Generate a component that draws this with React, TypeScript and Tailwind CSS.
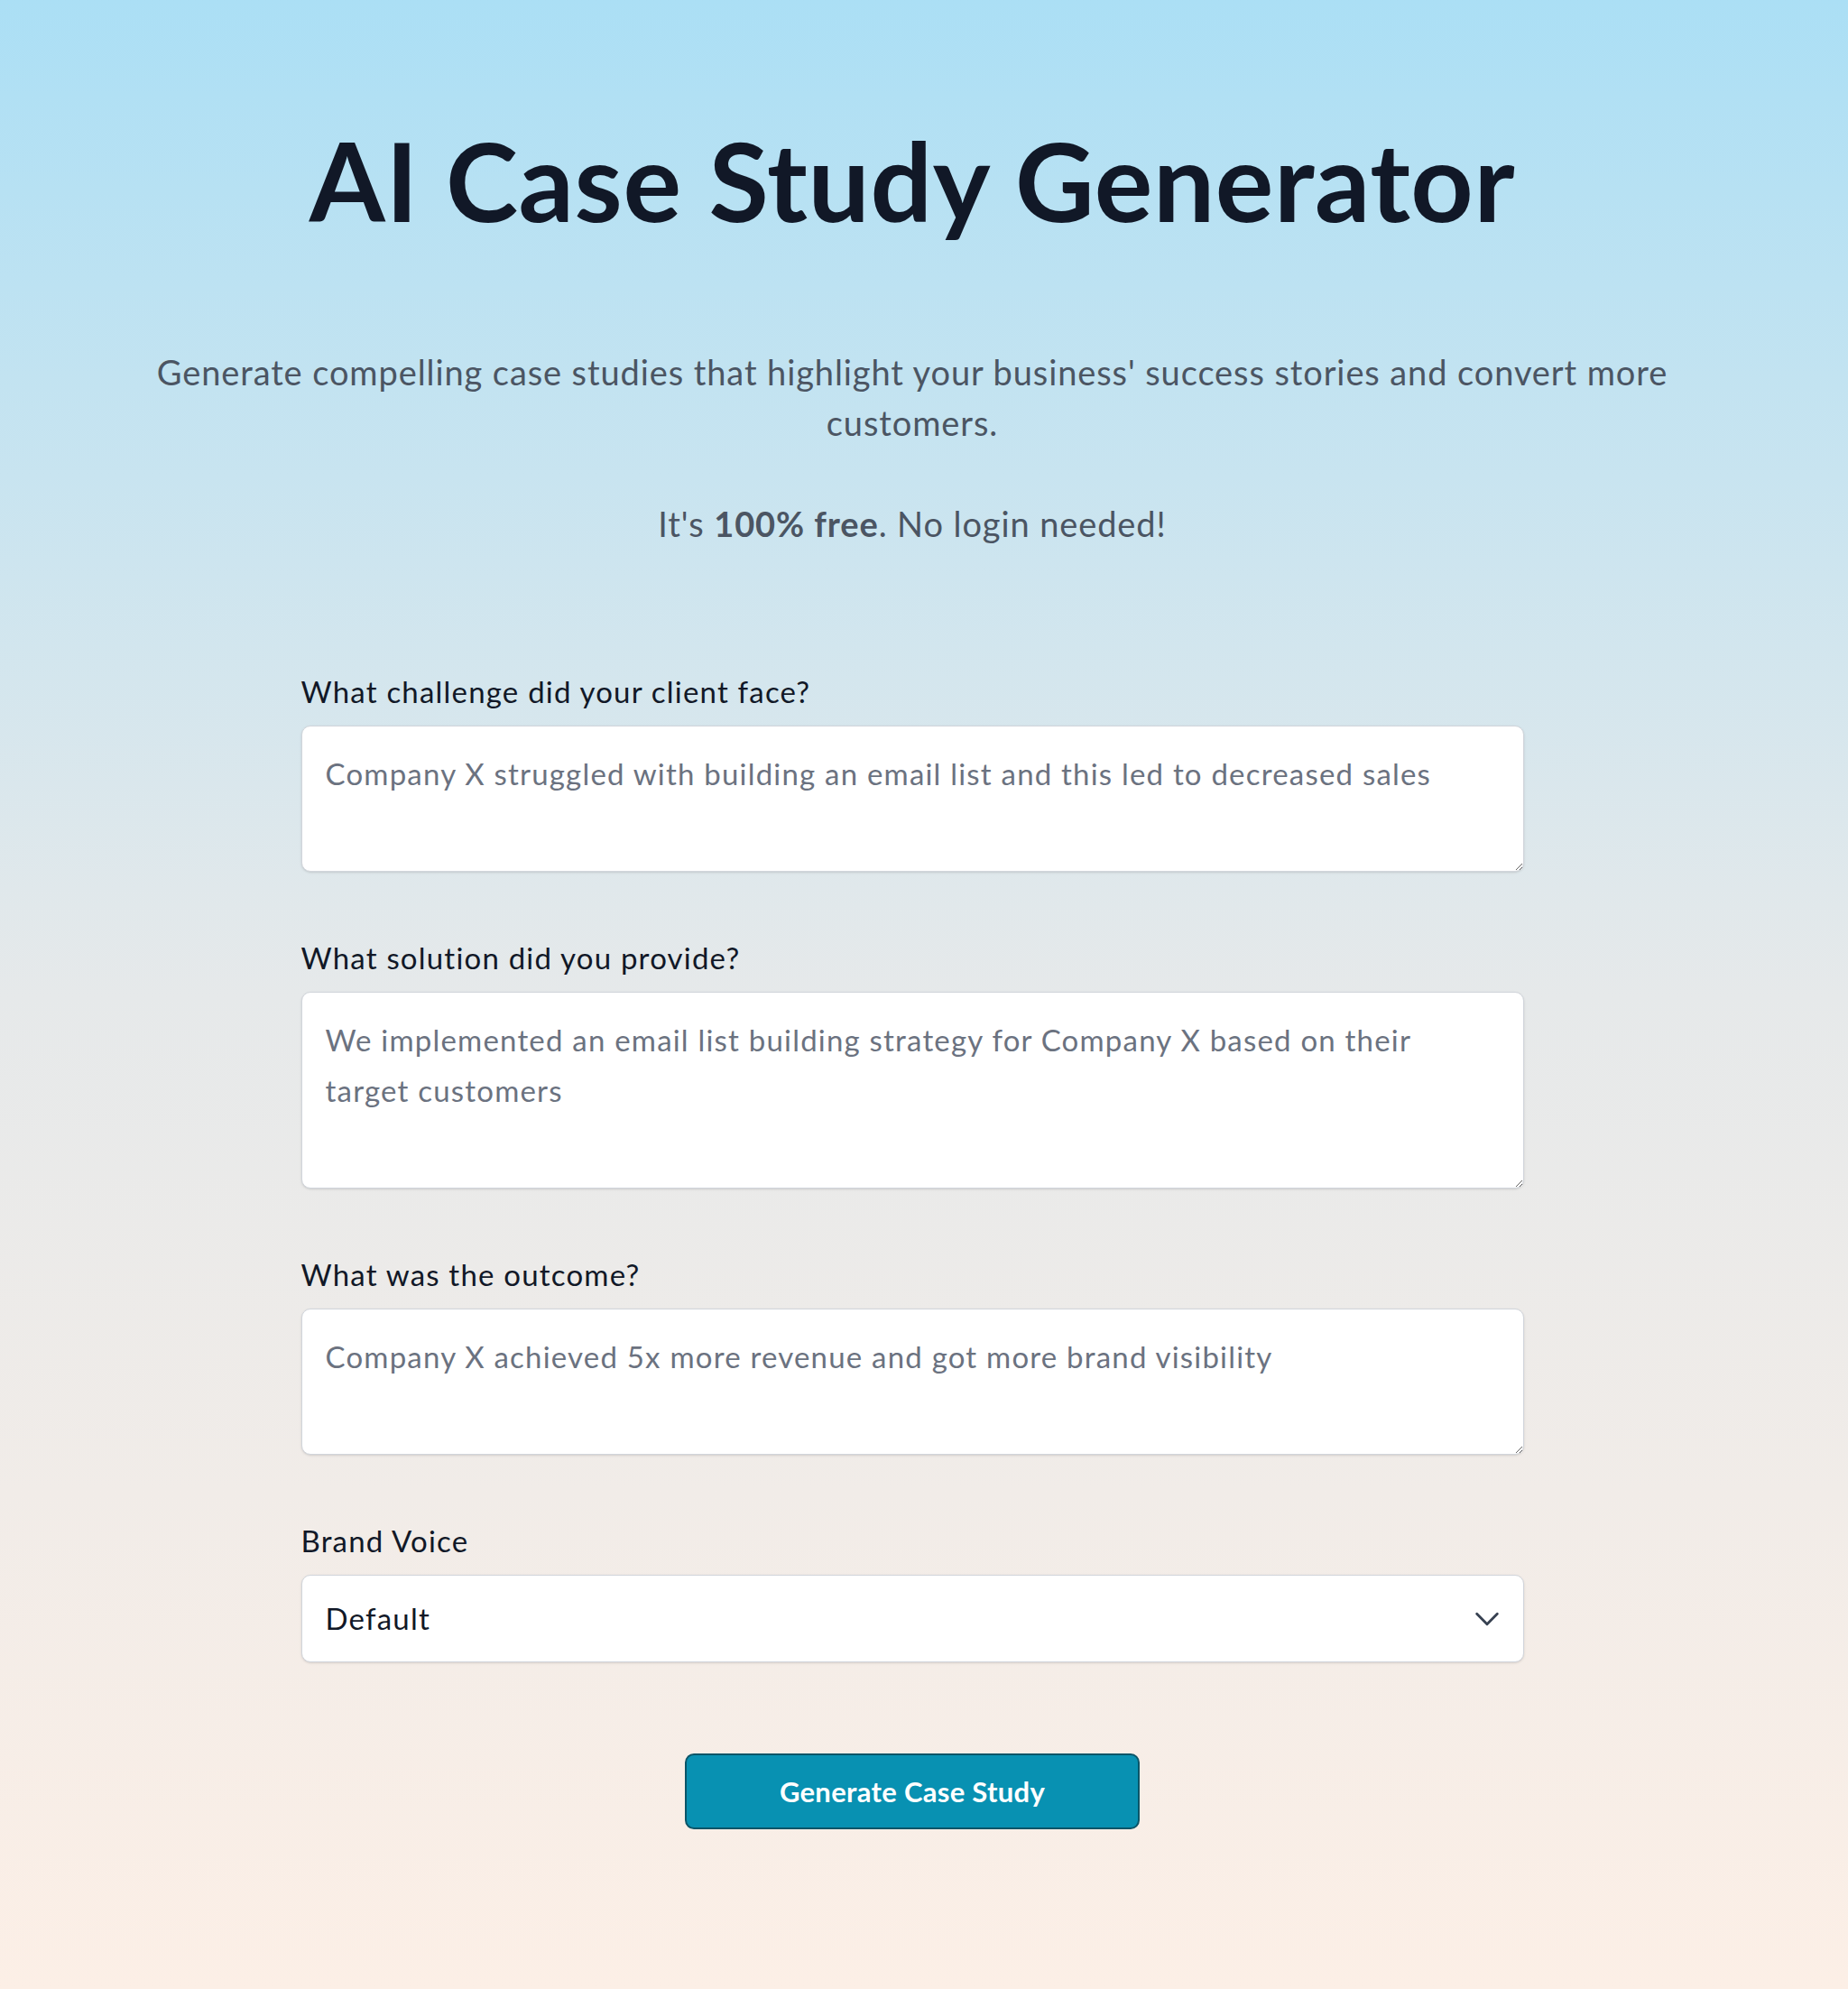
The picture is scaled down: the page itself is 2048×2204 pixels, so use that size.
import React, { useState } from 'react';

/* ── field definitions ── */
const fields = [
  {
    id: 'challenge',
    label: 'What challenge did your client face?',
    placeholder: 'Company X struggled with building an email list and this led to decreased sales',
    rows: 2,
  },
  {
    id: 'solution',
    label: 'What solution did you provide?',
    placeholder: 'We implemented an email list building strategy for Company X based on their target customers',
    rows: 3,
  },
  {
    id: 'outcome',
    label: 'What was the outcome?',
    placeholder: 'Company X achieved 5x more revenue and got more brand visibility',
    rows: 2,
  },
];

const voices = ['Default', 'Professional', 'Friendly', 'Witty', 'Persuasive'];

export default function App() {
  const [values, setValues] = useState<Record<string, string>>({});
  const [voice, setVoice] = useState('Default');

  return (
    <div
      className="min-h-[2204px] w-full bg-gradient-to-b from-[#abdff5] via-[#e6e9ea] to-[#fcefe6] text-[#111827]"
      style={{ fontFamily: 'Lato, "Open Sans", sans-serif' }}
    >
      <div className="mx-auto flex flex-col items-center pr-[26px] pt-[120px] pb-[176px]">
        {/* Heading */}
        <h1 className="text-center text-[121px] font-bold leading-[160px] tracking-[0.6px] text-[#111827]">
          AI Case Study Generator
        </h1>

        <p className="mt-[104px] max-w-[1700px] text-center text-[38px] leading-[56px] tracking-[0.9px] text-[#4b5563]">
          Generate compelling case studies that highlight your business' success stories and convert more customers.
        </p>

        <p className="mt-[56px] text-center text-[38px] leading-[56px] tracking-[0.9px] text-[#4b5563]">
          It's <span className="font-bold">100% free</span>. No login needed!
        </p>

        {/* Form */}
        <form className="mt-[136px] flex w-[1355px] flex-col gap-[73px]" onSubmit={(e) => e.preventDefault()}>
          {fields.map((f) => (
            <div key={f.id} className="flex flex-col gap-[15px]">
              <label htmlFor={f.id} className="text-[33px] leading-[45px] tracking-[1.2px] text-[#111827]">
                {f.label}
              </label>
              <textarea
                id={f.id}
                rows={f.rows}
                value={values[f.id] ?? ''}
                onChange={(e) => setValues({ ...values, [f.id]: e.target.value })}
                placeholder={f.placeholder}
                className="w-full rounded-[10px] border border-[#d1d5db] bg-white px-[26px] py-[24px] text-[33px] leading-[56px] tracking-[1.2px] text-[#111827] shadow-sm outline-none placeholder:text-[#6b7280]"
              />
            </div>
          ))}

          <div className="flex flex-col gap-[15px]">
            <label htmlFor="voice" className="text-[33px] leading-[45px] tracking-[1.2px] text-[#111827]">
              Brand Voice
            </label>
            <div className="relative">
              <select
                id="voice"
                value={voice}
                onChange={(e) => setVoice(e.target.value)}
                className="h-[97px] w-full appearance-none rounded-[10px] border border-[#d1d5db] bg-white px-[26px] text-[33px] tracking-[1.2px] text-[#111827] shadow-sm outline-none"
              >
                {voices.map((v) => (
                  <option key={v}>{v}</option>
                ))}
              </select>
              {/* chevron */}
              <svg
                className="pointer-events-none absolute right-[24px] top-1/2 h-[34px] w-[34px] -translate-y-1/2 text-[#374151]"
                viewBox="0 0 24 24"
                fill="none"
                stroke="currentColor"
                strokeWidth="2"
                strokeLinecap="round"
                strokeLinejoin="round"
              >
                <path d="m4 8 8 8 8-8" />
              </svg>
            </div>
          </div>

          <div className="mt-[28px] flex justify-center">
            <button
              type="submit"
              className="h-[84px] w-[504px] rounded-[10px] border-2 border-[#0b5568] bg-[#0891b2] text-[31px] font-bold tracking-[0.3px] text-white"
            >
              Generate Case Study
            </button>
          </div>
        </form>
      </div>
    </div>
  );
}
